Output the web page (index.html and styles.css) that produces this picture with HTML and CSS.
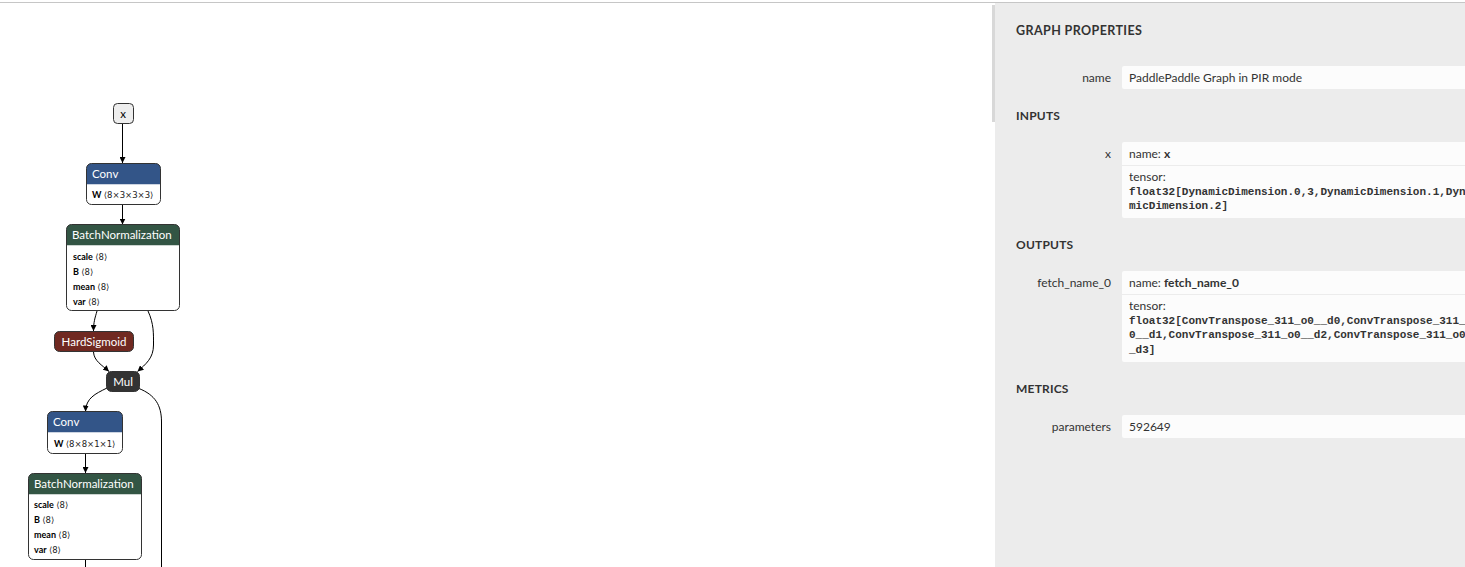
FILE: index.html
```html
<!DOCTYPE html>
<html lang="en">
<head>
    <meta charset="UTF-8">
    <title>Netron</title>
    <link rel="stylesheet" href="styles.css">
</head>
<body>
    <div class="page">
        <!-- graph canvas -->
        <div class="graph">
            <svg class="graph-svg" width="992" height="564" viewBox="0 3 992 564">
                <defs>
                    <marker id="arrow" viewBox="0 0 10 10" refX="10" refY="5" markerWidth="6" markerHeight="6" markerUnits="userSpaceOnUse" orient="auto">
                        <path d="M0,0 L10,5 L0,10 z" fill="#000"></path>
                    </marker>
                </defs>

                <g class="edges">
                    <path d="M122.5 123.5 L122.5 163"></path>
                    <path d="M122.5 204.5 L122.5 224.5"></path>
                    <path d="M97 311 C 95 318, 93.5 322, 93.5 331"></path>
                    <path d="M148 311 C 154 324, 153.5 334, 153.5 345 C 153.5 358, 146 364, 137.5 371.5"></path>
                    <path d="M93.5 352 C 94 361, 102 365, 109 371.5"></path>
                    <path d="M107 388 C 95 394, 86 398, 85.5 411.5"></path>
                    <path class="no-arrow" d="M139 388.5 C 155 395, 161.5 405, 161.5 422 L161.5 570"></path>
                    <path d="M85.5 453.5 L85.5 473"></path>
                    <path class="no-arrow" d="M85.5 559.5 L85.5 570"></path>
                </g>

                <!-- x -->
                <rect class="node-input" x="113.5" y="103.5" width="20" height="20" rx="4"></rect>
                <text class="node-input-text" x="123" y="117.5" text-anchor="middle">x</text>

                <!-- Conv -->
                <path class="head-layer" d="M86.5 184.5 V168.5 a5 5 0 0 1 5 -5 H155.5 a5 5 0 0 1 5 5 V184.5 z"></path>
                <path class="node-body" d="M86.5 184.5 H160.5 V199.5 a5 5 0 0 1 -5 5 H91.5 a5 5 0 0 1 -5 -5 z"></path>
                <rect class="node-border" x="86.5" y="163.5" width="74" height="41" rx="5"></rect>
                <text class="node-title" x="92" y="178">Conv</text>
                <text class="node-attr" x="92" y="198"><tspan class="attr-name">W</tspan> <tspan class="bracket">⟨8×3×3×3⟩</tspan></text>

                <!-- BatchNormalization -->
                <path class="head-norm" d="M66.5 245.5 V229.5 a5 5 0 0 1 5 -5 H174.5 a5 5 0 0 1 5 5 V245.5 z"></path>
                <path class="node-body" d="M66.5 245.5 H179.5 V305.5 a5 5 0 0 1 -5 5 H71.5 a5 5 0 0 1 -5 -5 z"></path>
                <rect class="node-border" x="66.5" y="224.5" width="113" height="86" rx="5"></rect>
                <text class="node-title" x="72" y="239">BatchNormalization</text>
                <text class="node-attr" x="73" y="260"><tspan class="attr-name">scale</tspan> <tspan class="bracket">⟨8⟩</tspan></text>
                <text class="node-attr" x="73" y="275"><tspan class="attr-name">B</tspan> <tspan class="bracket">⟨8⟩</tspan></text>
                <text class="node-attr" x="73" y="290"><tspan class="attr-name">mean</tspan> <tspan class="bracket">⟨8⟩</tspan></text>
                <text class="node-attr" x="73" y="305"><tspan class="attr-name">var</tspan> <tspan class="bracket">⟨8⟩</tspan></text>

                <!-- HardSigmoid -->
                <rect class="head-activation node-border" x="54.5" y="331.5" width="79" height="20" rx="5"></rect>
                <text class="node-title" x="94" y="346" text-anchor="middle">HardSigmoid</text>

                <!-- Mul -->
                <rect class="head-op node-border" x="106.5" y="371.5" width="33" height="20" rx="5"></rect>
                <text class="node-title" x="123" y="386" text-anchor="middle">Mul</text>

                <!-- Conv -->
                <path class="head-layer" d="M47.5 432.5 V416.5 a5 5 0 0 1 5 -5 H117.5 a5 5 0 0 1 5 5 V432.5 z"></path>
                <path class="node-body" d="M47.5 432.5 H122.5 V448.5 a5 5 0 0 1 -5 5 H52.5 a5 5 0 0 1 -5 -5 z"></path>
                <rect class="node-border" x="47.5" y="411.5" width="75" height="42" rx="5"></rect>
                <text class="node-title" x="53" y="426">Conv</text>
                <text class="node-attr" x="54" y="447"><tspan class="attr-name">W</tspan> <tspan class="bracket">⟨8×8×1×1⟩</tspan></text>

                <!-- BatchNormalization -->
                <path class="head-norm" d="M28.5 494.5 V478.5 a5 5 0 0 1 5 -5 H136.5 a5 5 0 0 1 5 5 V494.5 z"></path>
                <path class="node-body" d="M28.5 494.5 H141.5 V554.5 a5 5 0 0 1 -5 5 H33.5 a5 5 0 0 1 -5 -5 z"></path>
                <rect class="node-border" x="28.5" y="473.5" width="113" height="86" rx="5"></rect>
                <text class="node-title" x="34" y="488">BatchNormalization</text>
                <text class="node-attr" x="34" y="508"><tspan class="attr-name">scale</tspan> <tspan class="bracket">⟨8⟩</tspan></text>
                <text class="node-attr" x="34" y="523"><tspan class="attr-name">B</tspan> <tspan class="bracket">⟨8⟩</tspan></text>
                <text class="node-attr" x="34" y="538"><tspan class="attr-name">mean</tspan> <tspan class="bracket">⟨8⟩</tspan></text>
                <text class="node-attr" x="34" y="553"><tspan class="attr-name">var</tspan> <tspan class="bracket">⟨8⟩</tspan></text>
            </svg>
        </div>

        <div class="scrollbar"><div class="scroll-thumb"></div></div>

        <!-- sidebar -->
        <div class="sidebar">
            <div class="sidebar-title">GRAPH PROPERTIES</div>
            <div class="prop">
                <div class="prop-name">name</div>
                <div class="prop-value">
                    <div class="value-line">PaddlePaddle Graph in PIR mode</div>
                </div>
            </div>

            <div class="section-title">INPUTS</div>
            <div class="prop">
                <div class="prop-name">x</div>
                <div class="prop-value">
                    <div class="value-line">name: <b>x</b></div>
                    <div class="value-line value-detail">tensor:<code>float32[DynamicDimension.0,3,DynamicDimension.1,DynamicDimension.2]</code></div>
                </div>
            </div>

            <div class="section-title">OUTPUTS</div>
            <div class="prop">
                <div class="prop-name">fetch_name_0</div>
                <div class="prop-value">
                    <div class="value-line">name: <b>fetch_name_0</b></div>
                    <div class="value-line value-detail">tensor:<code>float32[ConvTranspose_311_o0__d0,ConvTranspose_311_o0__d1,ConvTranspose_311_o0__d2,ConvTranspose_311_o0__d3]</code></div>
                </div>
            </div>

            <div class="section-title">METRICS</div>
            <div class="prop">
                <div class="prop-name">parameters</div>
                <div class="prop-value">
                    <div class="value-line">592649</div>
                </div>
            </div>
        </div>
    </div>
</body>
</html>
```

FILE: styles.css
```css
body {
    margin: 0;
    height: 567px;
    overflow: hidden;
    background-color: #fff;
    font-family: Lato, "Open Sans", sans-serif;
}
.page {
    display: flex;
    margin-top: 2px;
    border-top: 1px solid #c6c6c6;
    height: 564px;
}
.graph {
    flex: none;
    width: 992px;
}
.graph-svg {
    display: block;
}
.edges path {
    fill: none;
    stroke: #000;
    stroke-width: 1;
    marker-end: url(#arrow);
}
.edges path.no-arrow {
    marker-end: none;
}
.node-input {
    fill: #eee;
    stroke: #333;
}
.node-input-text {
    font-size: 11.5px;
    fill: #000;
}
.node-border {
    fill: none;
    stroke: #333;
    stroke-width: 1;
}
.node-body {
    fill: #fff;
}
.head-layer {
    fill: rgb(51, 85, 136);
}
.head-norm {
    fill: rgb(51, 85, 68);
}
.head-activation {
    fill: rgb(112, 41, 33);
}
.head-op {
    fill: #333;
}
.node-title {
    font-size: 11.5px;
    fill: #fff;
}
.node-attr {
    font-size: 9px;
    fill: #000;
}
.attr-name {
    font-weight: bold;
}
.bracket {
    font-family: "DejaVu Sans", sans-serif;
    font-size: 8.5px;
    fill: #222;
}
.scrollbar {
    flex: none;
    width: 3px;
    padding-top: 2px;
}
.scroll-thumb {
    height: 117px;
    background-color: #d8d8d8;
}
.sidebar {
    flex: none;
    width: 520px;
    background-color: #ececec;
    padding-left: 21px;
    color: #333;
    font-size: 12px;
}
.sidebar-title {
    font-weight: bold;
    font-size: 12.5px;
    letter-spacing: 0.4px;
    line-height: 16px;
    margin: 20px 0 27px;
    color: #333;
}
.section-title {
    font-weight: bold;
    line-height: 16px;
    letter-spacing: 0.2px;
    margin: 19px 0 18px;
    color: #333;
}
.prop {
    display: flex;
    gap: 11px;
}
.prop-name {
    width: 95px;
    text-align: right;
    padding-top: 4px;
    line-height: 15px;
    white-space: nowrap;
}
.prop-value {
    width: 360px;
    background-color: #fcfcfc;
    border-radius: 2px;
}
.value-line {
    padding: 4px 7px;
    line-height: 15px;
}
.value-detail {
    border-top: 1px solid #ececec;
    line-height: 14.5px;
    padding-bottom: 4.5px;
}
.value-detail code {
    display: block;
    font-family: "Liberation Mono", monospace;
    font-size: 11px;
    line-height: 14.5px;
    font-weight: bold;
    word-break: break-all;
}
```
